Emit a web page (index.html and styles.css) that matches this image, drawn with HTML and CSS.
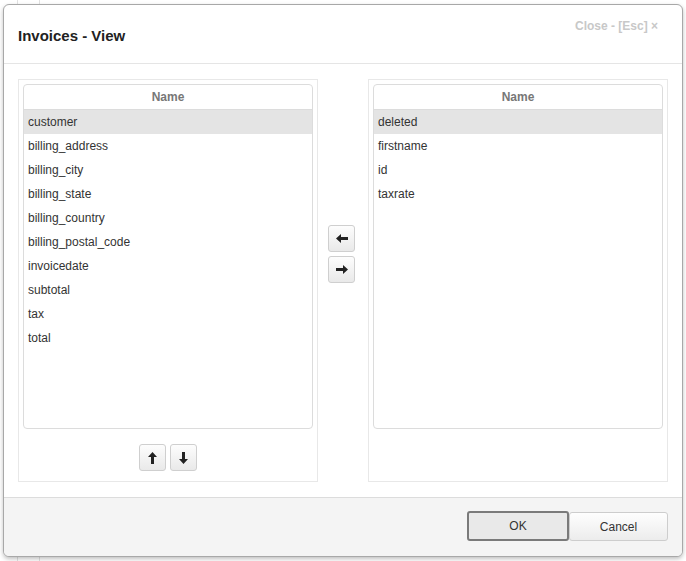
FILE: index.html
```html
<!DOCTYPE html>
<html>
<head>
<meta charset="utf-8">
<link rel="stylesheet" href="styles.css">
</head>
<body>
<div class="dialog">
  <div class="dlg-header">
    <div class="dlg-title">Invoices - View</div>
    <div class="dlg-close">Close - [Esc] ×</div>
  </div>
  <div class="dlg-body">
    <div class="panel">
      <div class="list">
        <div class="list-head">Name</div>
        <div class="row sel">customer</div>
        <div class="row">billing_address</div>
        <div class="row">billing_city</div>
        <div class="row">billing_state</div>
        <div class="row">billing_country</div>
        <div class="row">billing_postal_code</div>
        <div class="row">invoicedate</div>
        <div class="row">subtotal</div>
        <div class="row">tax</div>
        <div class="row">total</div>
      </div>
      <div class="panel-tools">
        <button class="ibtn"><svg width="9" height="12" viewBox="0 0 9 12"><path d="M4.5 0 L9 5 L6 5 L6 12 L3 12 L3 5 L0 5 Z" fill="#222"/></svg></button>
        <button class="ibtn"><svg width="9" height="12" viewBox="0 0 9 12"><path d="M4.5 12 L9 7 L6 7 L6 0 L3 0 L3 7 L0 7 Z" fill="#222"/></svg></button>
      </div>
    </div>
    <div class="mid">
      <button class="ibtn"><svg width="12" height="9" viewBox="0 0 12 9"><path d="M0 4.5 L5 0 L5 3 L12 3 L12 6 L5 6 L5 9 Z" fill="#222"/></svg></button>
      <button class="ibtn"><svg width="12" height="9" viewBox="0 0 12 9"><path d="M12 4.5 L7 0 L7 3 L0 3 L0 6 L7 6 L7 9 Z" fill="#222"/></svg></button>
    </div>
    <div class="panel">
      <div class="list">
        <div class="list-head">Name</div>
        <div class="row sel">deleted</div>
        <div class="row">firstname</div>
        <div class="row">id</div>
        <div class="row">taxrate</div>
      </div>
    </div>
  </div>
  <div class="dlg-footer">
    <button class="btn btn-ok">OK</button>
    <button class="btn">Cancel</button>
  </div>
</div>
</body>
</html>
```
FILE: styles.css
```css
html, body {
  margin: 0;
  padding: 0;
}
body {
  width: 686px;
  height: 561px;
  overflow: hidden;
  font-family: "Liberation Sans", Arial, sans-serif;
  font-size: 12px;
  color: #333;
  background:
    linear-gradient(#e2e2e2, #e2e2e2) 17px 0 / 1px 100% no-repeat,
    linear-gradient(#e2e2e2, #e2e2e2) 39px 0 / 1px 100% no-repeat,
    #fff;
  padding-top: 4px;
  box-sizing: border-box;
}
.dialog {
  margin-left: 3px;
  width: 680px;
  height: 553px;
  box-sizing: border-box;
  border: 1px solid #a8a8a8;
  border-radius: 6px;
  background: #fff;
  box-shadow: 0 2px 4px rgba(0,0,0,0.25);
  display: flex;
  flex-direction: column;
  overflow: hidden;
}
.dlg-header {
  height: 58px;
  border-bottom: 1px solid #e5e5e5;
  display: flex;
  justify-content: space-between;
  padding: 0 24px 0 14px;
  flex: none;
}
.dlg-title {
  font-size: 15px;
  font-weight: bold;
  color: #222;
  padding-top: 22px;
}
.dlg-close {
  font-size: 12px;
  font-weight: bold;
  color: #c8c8c8;
  padding-top: 14px;
}
.dlg-body {
  flex: 1;
  display: flex;
  padding: 15px 14px 15px 14px;
}
.panel {
  width: 300px;
  box-sizing: border-box;
  border: 1px solid #e8e8e8;
  padding: 4px;
  display: flex;
  flex-direction: column;
}
.list {
  height: 345px;
  box-sizing: border-box;
  border: 1px solid #dcdcdc;
  border-radius: 4px;
  overflow: hidden;
}
.list-head {
  height: 24px;
  line-height: 24px;
  text-align: center;
  font-weight: bold;
  color: #777;
  border-bottom: 1px solid #dcdcdc;
}
.row {
  height: 24px;
  line-height: 24px;
  padding-left: 4px;
  color: #333;
}
.row.sel {
  background: #e4e4e4;
}
.panel-tools {
  display: flex;
  justify-content: center;
  gap: 4px;
  padding-top: 15px;
}
.ibtn {
  width: 27px;
  height: 27px;
  box-sizing: border-box;
  border: 1px solid #cfcfcf;
  border-radius: 3px;
  background: linear-gradient(#fdfdfd, #e9e9e9);
  padding: 0;
  display: flex;
  align-items: center;
  justify-content: center;
}
.mid {
  width: 50px;
  display: flex;
  flex-direction: column;
  align-items: flex-start;
  gap: 4px;
  padding-top: 146px;
  padding-left: 10px;
  box-sizing: border-box;
}
.dlg-footer {
  height: 59px;
  flex: none;
  border-top: 1px solid #dcdcdc;
  background: #f4f4f4;
  display: flex;
  justify-content: flex-end;
  align-items: flex-start;
  padding: 14px 14px 0 0;
  box-sizing: border-box;
}
.btn {
  height: 29px;
  width: 99px;
  box-sizing: border-box;
  border: 1px solid #cdcdcd;
  border-radius: 3px;
  background: linear-gradient(#fefefe, #ececec);
  font-family: "Liberation Sans", Arial, sans-serif;
  font-size: 12px;
  color: #333;
  padding: 0;
}
.btn-ok {
  width: 102px;
  height: 30px;
  border: 2px solid #7a7a7a;
  background: #e9e9e9;
  margin-top: -1px;
}
```
